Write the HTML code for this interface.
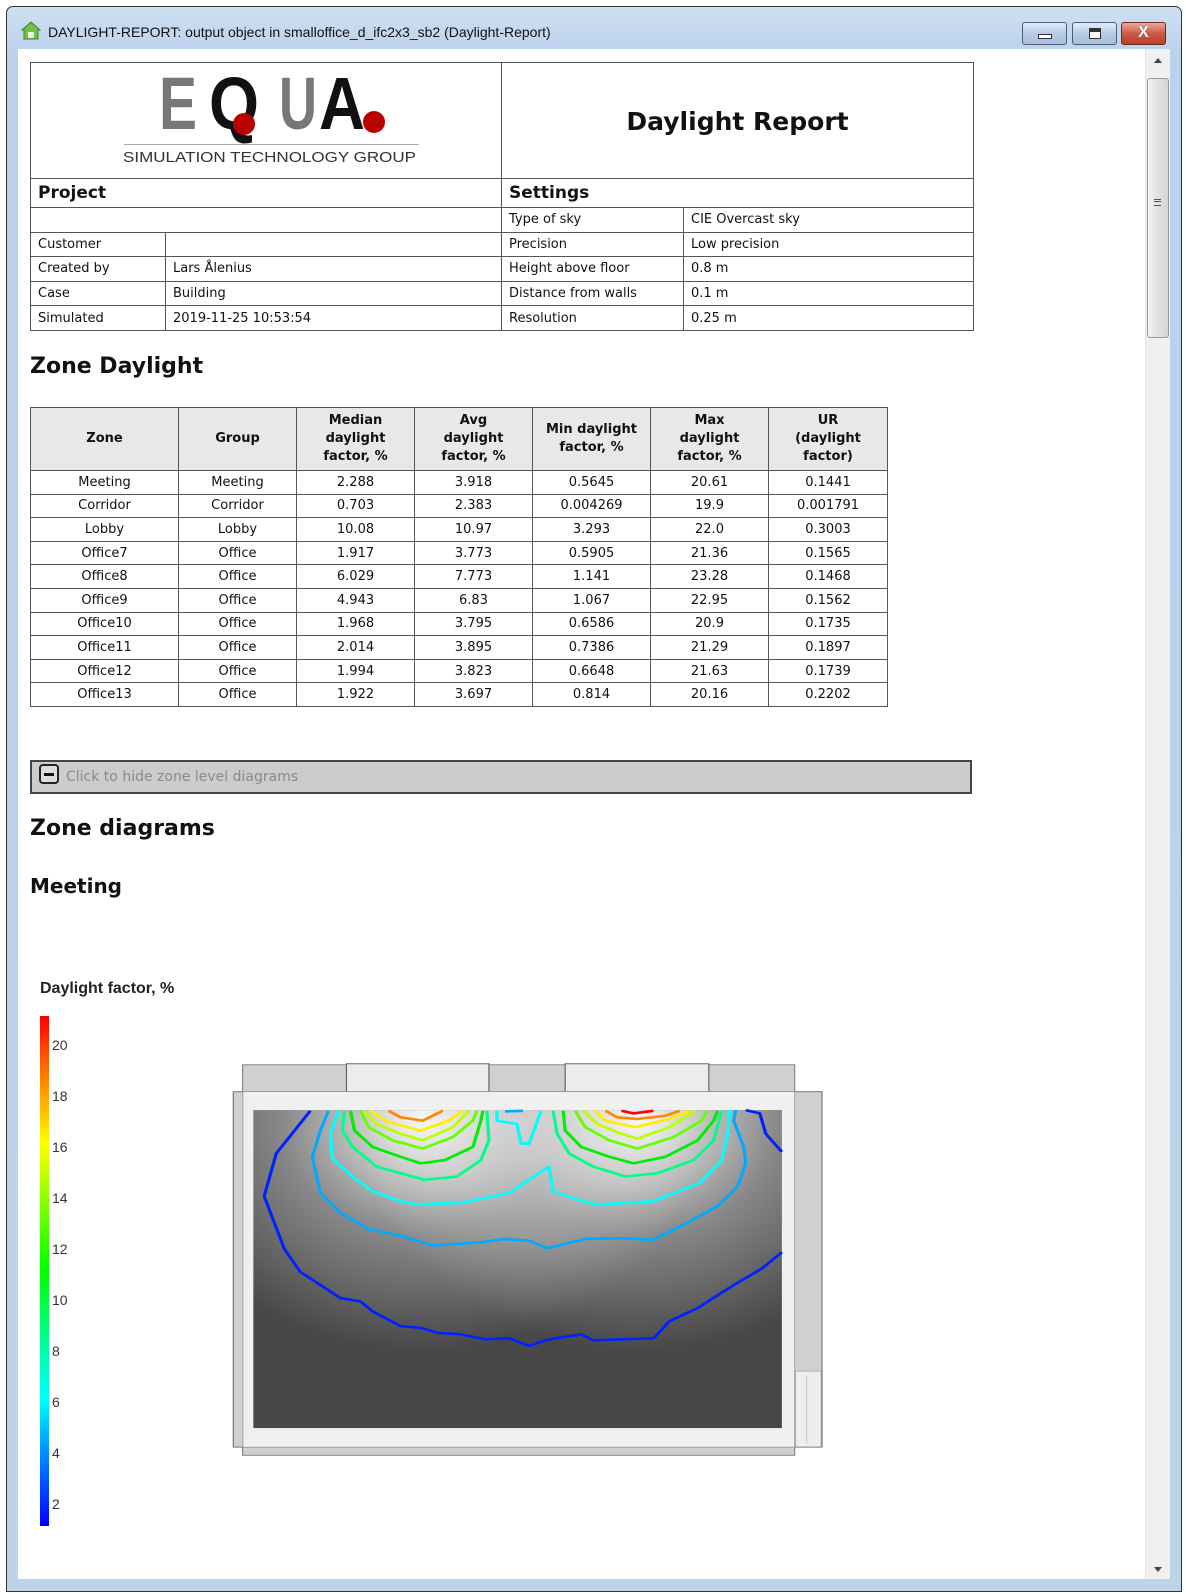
<!DOCTYPE html>
<html><head><meta charset="utf-8">
<style>
*{margin:0;padding:0;box-sizing:border-box}
body{width:1186px;height:1594px;background:#fff;position:relative;overflow:hidden;font-family:"DejaVu Sans","Liberation Sans",sans-serif;}
.abs{position:absolute}
#win{left:6px;top:6px;width:1176px;height:1586px;border:1px solid #333;border-radius:7px 7px 0 0;background:linear-gradient(#cfdff2,#bcd2ec 45px,#bcd3ea);}
#title{left:48px;top:24px;font:14px "Liberation Sans",sans-serif;color:#111;}
.btn{top:22px;height:23px;border:1px solid #4a5e78;border-radius:3px;background:linear-gradient(#e4edf8,#b8cbe3 50%,#a7bddb);}
#content{left:18px;top:49px;width:1127px;height:1530px;background:#fff;}
#sb{left:1145px;top:49px;width:25px;height:1530px;background:#f0f0f0;border-left:1px solid #e4e4e4}
table{border-collapse:collapse;table-layout:fixed;position:absolute}
td,th{border:1px solid #555;font-size:13px;color:#111;padding:0 7px;white-space:nowrap;overflow:hidden}
#ht td{height:24.6px}
#zt td{text-align:center;height:23.6px;padding:0}
#zt th{background:#e8e8e8;font-weight:bold;font-size:13px;line-height:18px;height:63px;padding:0;white-space:nowrap}
h2{position:absolute;font-size:22px;font-weight:bold;color:#111}
</style></head><body>
<div id="win" class="abs"></div>
<svg class="abs" style="left:20px;top:19px" width="22" height="22" viewBox="0 0 22 22"><path d="M2 11 L11 3 L20 11 L18 11 L18 20 L4 20 L4 11Z" fill="#6fbf4a" stroke="#3f7f2a"/><path d="M8 19 L8 13 L14 13 L14 19" fill="#e8f5e0"/></svg>
<div id="title" class="abs">DAYLIGHT-REPORT: output object in smalloffice_d_ifc2x3_sb2 (Daylight-Report)</div>
<div class="abs btn" style="left:1022px;width:45px"><div class="abs" style="left:15px;top:11px;width:14px;height:5px;border:1px solid #333;background:#fff"></div></div>
<div class="abs btn" style="left:1072px;width:45px"><div class="abs" style="left:16px;top:5px;width:12px;height:11px;border:1px solid #333;background:#fff;box-shadow:inset 0 3px 0 #333"></div></div>
<div class="abs btn" style="left:1121px;width:45px;border-color:#6b2a22;background:linear-gradient(#e9a89b,#cf5a45 50%,#b9402d)"><div class="abs" style="left:0;top:1px;width:43px;text-align:center;font:bold 16px 'Liberation Sans',sans-serif;color:#fff;text-shadow:0 0 1px #333">X</div></div>
<div id="content" class="abs"></div>
<div id="sb" class="abs">
 <div class="abs" style="left:8px;top:9px;width:0;height:0;border-left:4px solid transparent;border-right:4px solid transparent;border-bottom:5px solid #444"></div>
 <div class="abs" style="left:1px;top:29px;width:22px;height:260px;border:1px solid #999;border-radius:3px;background:linear-gradient(90deg,#f2f2f2,#e0e0e0 50%,#d6d6d6)"></div>
 <div class="abs" style="left:8px;top:150px;width:7px;height:7px;border-top:1px solid #555;border-bottom:1px solid #555"><div style="height:2px;border-bottom:1px solid #555"></div></div>
 <div class="abs" style="left:8px;top:1518px;width:0;height:0;border-left:4px solid transparent;border-right:4px solid transparent;border-top:5px solid #444"></div>
</div>

<table id="ht" style="left:30px;top:62px;width:943px">
<colgroup><col style="width:135px"><col style="width:336px"><col style="width:182px"><col style="width:290px"></colgroup>
<tr><td colspan="2" style="height:116px;padding:0;position:relative">
<svg width="470" height="114" style="display:block">
<text x="128" y="65" font-family="Liberation Sans" font-size="74" font-weight="bold" fill="#777" textLength="38" lengthAdjust="spacingAndGlyphs">E</text>
<text x="178" y="65" font-family="Liberation Sans" font-size="74" font-weight="bold" fill="#111" textLength="50" lengthAdjust="spacingAndGlyphs">Q</text>
<circle cx="213" cy="60" r="11" fill="#b00"/>
<text x="248" y="65" font-family="Liberation Sans" font-size="74" font-weight="bold" fill="#777" textLength="38" lengthAdjust="spacingAndGlyphs">U</text>
<text x="288" y="65" font-family="Liberation Sans" font-size="74" font-weight="bold" fill="#111" textLength="46" lengthAdjust="spacingAndGlyphs">A</text>
<circle cx="343" cy="58" r="11" fill="#b00"/>
<line x1="93" y1="80.5" x2="388" y2="80.5" stroke="#aaa" stroke-width="1"/>
<text x="92" y="98" font-family="Liberation Sans" font-size="15" fill="#333" textLength="293" lengthAdjust="spacingAndGlyphs">SIMULATION TECHNOLOGY GROUP</text>
</svg></td>
<td colspan="2" style="text-align:center;font-size:25px;font-weight:bold;padding-top:2px">Daylight Report</td></tr>
<tr><td colspan="2" style="height:29px;font-size:17px;font-weight:bold">Project</td><td colspan="2" style="height:29px;font-size:17px;font-weight:bold">Settings</td></tr>
<tr><td colspan="2"></td><td>Type of sky</td><td>CIE Overcast sky</td></tr>
<tr><td>Customer</td><td></td><td>Precision</td><td>Low precision</td></tr>
<tr><td>Created by</td><td>Lars Ålenius</td><td>Height above floor</td><td>0.8 m</td></tr>
<tr><td>Case</td><td>Building</td><td>Distance from walls</td><td>0.1 m</td></tr>
<tr><td>Simulated</td><td>2019-11-25 10:53:54</td><td>Resolution</td><td>0.25 m</td></tr>
</table>

<h2 style="left:30px;top:354px">Zone Daylight</h2>

<table id="zt" style="left:30px;top:407px;width:857px">
<colgroup><col style="width:148px"><col style="width:118px"><col style="width:118px"><col style="width:118px"><col style="width:118px"><col style="width:118px"><col style="width:119px"></colgroup>
<tr><th>Zone</th><th>Group</th><th>Median<br>daylight<br>factor, %</th><th>Avg<br>daylight<br>factor, %</th><th>Min daylight<br>factor, %</th><th>Max<br>daylight<br>factor, %</th><th>UR<br>(daylight<br>factor)</th></tr>
<tr><td>Meeting</td><td>Meeting</td><td>2.288</td><td>3.918</td><td>0.5645</td><td>20.61</td><td>0.1441</td></tr>
<tr><td>Corridor</td><td>Corridor</td><td>0.703</td><td>2.383</td><td>0.004269</td><td>19.9</td><td>0.001791</td></tr>
<tr><td>Lobby</td><td>Lobby</td><td>10.08</td><td>10.97</td><td>3.293</td><td>22.0</td><td>0.3003</td></tr>
<tr><td>Office7</td><td>Office</td><td>1.917</td><td>3.773</td><td>0.5905</td><td>21.36</td><td>0.1565</td></tr>
<tr><td>Office8</td><td>Office</td><td>6.029</td><td>7.773</td><td>1.141</td><td>23.28</td><td>0.1468</td></tr>
<tr><td>Office9</td><td>Office</td><td>4.943</td><td>6.83</td><td>1.067</td><td>22.95</td><td>0.1562</td></tr>
<tr><td>Office10</td><td>Office</td><td>1.968</td><td>3.795</td><td>0.6586</td><td>20.9</td><td>0.1735</td></tr>
<tr><td>Office11</td><td>Office</td><td>2.014</td><td>3.895</td><td>0.7386</td><td>21.29</td><td>0.1897</td></tr>
<tr><td>Office12</td><td>Office</td><td>1.994</td><td>3.823</td><td>0.6648</td><td>21.63</td><td>0.1739</td></tr>
<tr><td>Office13</td><td>Office</td><td>1.922</td><td>3.697</td><td>0.814</td><td>20.16</td><td>0.2202</td></tr>
</table>

<div class="abs" style="left:30px;top:760px;width:942px;height:34px;background:#ccc;border:2px solid #444"></div>
<div class="abs" style="left:39px;top:764px;width:20px;height:20px;border:2px solid #222;border-radius:4px;background:#ddd"><div class="abs" style="left:3px;top:7px;width:10px;height:3px;background:#111"></div></div>
<div class="abs" style="left:66px;top:769px;font-size:14px;color:#8a8a8a">Click to hide zone level diagrams</div>

<h2 style="left:30px;top:816px">Zone diagrams</h2>
<h2 style="left:30px;top:874px;font-size:20px">Meeting</h2>

<div class="abs" style="left:40px;top:980px;font:bold 16px 'Liberation Sans',sans-serif;color:#222">Daylight factor, %</div>
<div class="abs" style="left:40px;top:1016px;width:9px;height:510px;background:linear-gradient(#f00,#ff8000 12%,#ff0 25%,#80ff00 37%,#0f0 50%,#00ff80 62%,#0ff 75%,#0080ff 87%,#00f)"></div>
<div class="abs" style="left:52px;top:1020px;font:14px 'Liberation Sans',sans-serif;color:#333;line-height:51px">20<br>18<br>16<br>14<br>12<br>10<br>8<br>6<br>4<br>2</div>

<svg class="abs" style="left:200px;top:1022px" width="626" height="434" viewBox="0 0 1560 1320" preserveAspectRatio="none">
<defs>
<radialGradient id="g1" gradientUnits="userSpaceOnUse" cx="555" cy="300" r="700"><stop offset="0" stop-color="#fff" stop-opacity=".95"/><stop offset=".5" stop-color="#fff" stop-opacity=".35"/><stop offset="1" stop-color="#fff" stop-opacity="0"/></radialGradient>
<radialGradient id="g2" gradientUnits="userSpaceOnUse" cx="1090" cy="300" r="700"><stop offset="0" stop-color="#fff" stop-opacity=".95"/><stop offset=".5" stop-color="#fff" stop-opacity=".35"/><stop offset="1" stop-color="#fff" stop-opacity="0"/></radialGradient>
</defs>
<rect x="106" y="130" width="1376" height="84" fill="#d0d0d0" stroke="#888" stroke-width="3"/>
<rect x="365" y="127" width="355" height="87" fill="#ececec" stroke="#666" stroke-width="3"/>
<rect x="910" y="127" width="358" height="87" fill="#ececec" stroke="#666" stroke-width="3"/>
<rect x="106" y="1290" width="1376" height="28" fill="#d0d0d0" stroke="#888" stroke-width="3"/>
<rect x="83" y="212" width="1467" height="1081" fill="#d0d0d0" stroke="#777" stroke-width="3"/>
<rect x="107" y="212" width="1375" height="1081" fill="#f0f0f0" stroke="#999" stroke-width="2"/>
<rect x="1484" y="1062" width="64" height="230" fill="#eee" stroke="#999" stroke-width="2"/>
<line x1="1512" y1="1075" x2="1512" y2="1282" stroke="#bbb" stroke-width="2"/>
<rect x="133" y="268" width="1317" height="967" fill="#484848"/>
<rect x="133" y="268" width="1317" height="967" fill="url(#g1)"/>
<rect x="133" y="268" width="1317" height="967" fill="url(#g2)"/>
<g fill="none" stroke-width="8" stroke-linejoin="round">
<path stroke="#0022ff" d="M275 270 L190 400 L160 530 L210 690 L250 760 L300 800 L350 840 L400 850 L430 880 L500 925 L550 930 L590 945 L650 950 L710 965 L770 962 L820 985 L870 965 L950 950 L980 968 L1130 962 L1170 910 L1240 870 L1330 800 L1400 750 L1450 700"/>
<path stroke="#0022ff" d="M1360 268 L1395 278 L1410 340 L1450 395"/>
<path stroke="#00aaff" d="M760 272 L805 270"/>
<path stroke="#00aaff" d="M320 270 L300 330 L280 410 L300 520 L350 580 L420 630 L500 650 L580 680 L700 670 L760 660 L820 665 L865 688 L960 660 L1050 658 L1130 662 L1200 620 L1290 560 L1340 500 L1360 430 L1355 380 L1330 300 L1335 268"/>
<path stroke="#00ffff" d="M345 270 L325 340 L330 415 L380 470 L430 515 L500 545 L540 555 L650 550 L770 520 L870 440 L880 515 L965 550 L1000 555 L1130 545 L1245 490 L1300 420 L1315 340 L1320 268"/>
<path stroke="#00ffff" d="M740 270 L740 300 L790 310 L800 370 L820 370 L850 270"/>
<path stroke="#00ff88" d="M360 270 L355 330 L380 380 L440 440 L500 460 L560 480 L640 470 L700 420 L720 360 L715 270"/>
<path stroke="#00ff88" d="M880 270 L890 340 L920 400 L980 440 L1060 470 L1140 460 L1230 420 L1280 360 L1300 270"/>
<path stroke="#00ee00" d="M375 270 L385 330 L430 380 L500 410 L550 430 L610 420 L680 380 L700 300 L705 270"/>
<path stroke="#00ee00" d="M905 270 L910 330 L950 380 L1020 410 L1080 430 L1160 410 L1240 360 L1280 300 L1290 270"/>
<path stroke="#66ff00" d="M400 270 L420 320 L480 360 L555 385 L630 350 L680 300 L690 270"/>
<path stroke="#66ff00" d="M935 270 L960 320 L1020 360 L1090 385 L1180 350 L1250 300 L1265 270"/>
<path stroke="#bbff00" d="M410 270 L440 310 L500 340 L555 360 L630 320 L670 270"/>
<path stroke="#bbff00" d="M955 270 L990 310 L1050 340 L1090 355 L1170 320 L1235 270"/>
<path stroke="#ffee00" d="M425 270 L470 305 L550 330 L620 300 L655 270"/>
<path stroke="#ffee00" d="M985 270 L1010 300 L1085 320 L1170 295 L1220 270"/>
<path stroke="#ff8800" d="M470 270 L500 290 L555 300 L605 270"/>
<path stroke="#ff8800" d="M1010 270 L1040 290 L1090 295 L1160 285 L1195 270"/>
<path stroke="#ff0000" d="M1050 270 L1080 278 L1130 270"/>
</g>
</svg>
</body></html>
